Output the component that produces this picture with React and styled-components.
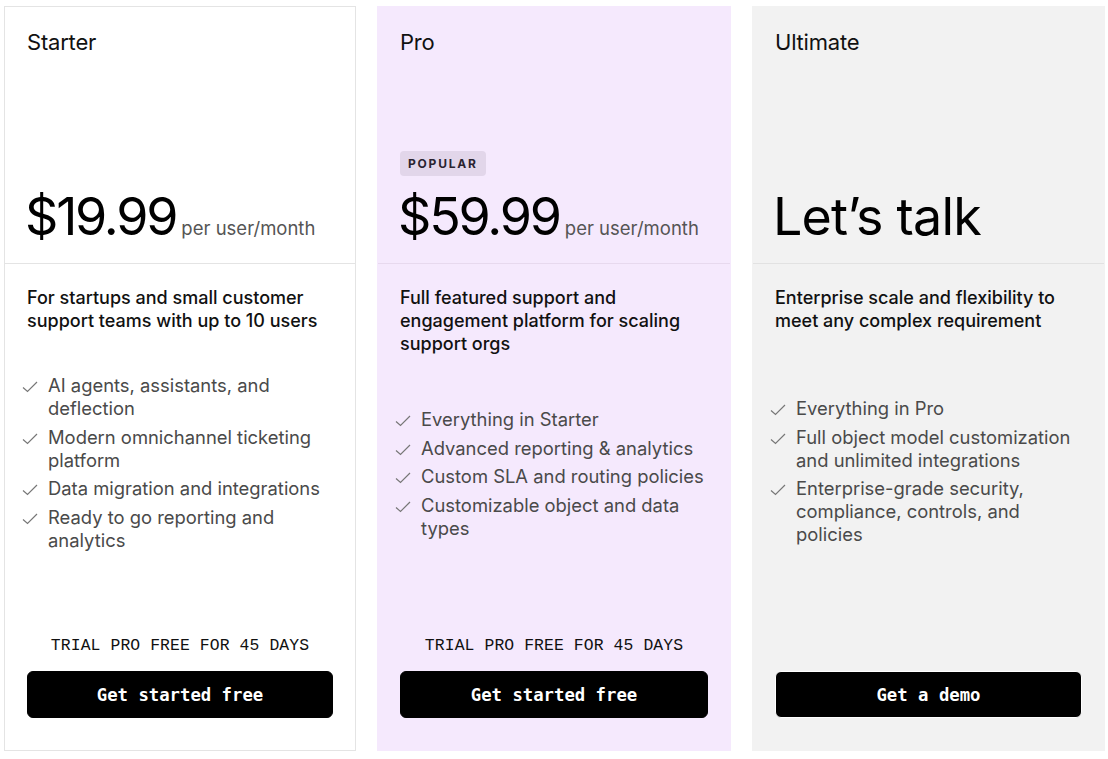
import styled, { createGlobalStyle } from 'styled-components';

const Global = createGlobalStyle`
  html, body { margin: 0; padding: 0; background: #fff; }
  body { font-family: Inter, "Noto Sans", sans-serif; color: #111; }
`

const Page = styled.div`
  display: grid;
  grid-template-columns: 352px 354px 353px;
  gap: 21px;
  padding: 6px 4px 8px;
  height: 759px;
  box-sizing: border-box;
`

const Card = styled.div`
  display: flex;
  flex-direction: column;
  background: ${p => p.bg};
  border: 1px solid ${p => p.line};
  box-sizing: border-box;
`

const Head = styled.div`
  height: 257px;
  box-sizing: border-box;
  padding: 23px 22px 20px;
  display: flex;
  flex-direction: column;
  justify-content: space-between;
  border-bottom: 1px solid ${p => p.line};
`

const Title = styled.h3`
  margin: 0;
  font-size: 22px;
  font-weight: 400;
  line-height: 24px;
  letter-spacing: -0.2px;
`

const Badge = styled.span`
  display: inline-block;
  background: #e2d6ea;
  border-radius: 4px;
  padding: 0 8px;
  height: 25px;
  line-height: 25px;
  font-size: 12px;
  font-weight: 700;
  letter-spacing: 1.8px;
  color: #2a2330;
  margin-bottom: 15px;
`

const PriceRow = styled.div`
  display: flex;
  align-items: baseline;
  gap: 5px;
`

const Price = styled.span`
  font-size: 52px;
  line-height: 52px;
  letter-spacing: ${p => (p.wide ? '-0.8px' : '-2.2px')};
  font-weight: 400;
  color: #000;
  margin-left: -2px;
`

const Per = styled.span`
  font-size: 18.5px;
  color: #555;
`

const Body = styled.div`
  flex: 1;
  display: flex;
  flex-direction: column;
  padding: 22px 22px 32px;
`

const Desc = styled.p`
  margin: 0;
  font-size: 18px;
  line-height: 23px;
  font-weight: 500;
  color: #111;
`

const Features = styled.ul`
  list-style: none;
  margin: ${p => p.top}px 0 0 -5px;
  padding: 0;
  display: flex;
  flex-direction: column;
  gap: 5.5px;
`

const Item = styled.li`
  display: flex;
  gap: 10px;
  font-size: 18.4px;
  line-height: 23px;
  color: #4a4a4a;

  svg { flex: none; margin-top: 7px; }
`

const Trial = styled.div`
  margin-top: auto;
  text-align: center;
  font-family: "Liberation Mono", "DejaVu Sans Mono", monospace;
  font-size: 16.4px;
  letter-spacing: 0.1px;
  color: #111;
  margin-bottom: 16px;
`

const Button = styled.button`
  margin-top: ${p => (p.alone ? 'auto' : '0')};
  height: 47px;
  width: 100%;
  background: #000;
  color: #fff;
  border: 1px solid ${p => p.ring || '#000'};
  border-radius: 6px;
  font-family: "DejaVu Sans Mono", "Liberation Mono", monospace;
  font-size: 17.3px;
  font-weight: 700;
  cursor: pointer;
`

const Check = () => (
  <svg width="16" height="12" viewBox="0 0 16 12">
    <path d="M1 6.5 L5.5 10.5 L15 1" fill="none" stroke="#777" strokeWidth="1.2" />
  </svg>
)

const plans = [
  {
    name: 'Starter',
    price: '$19.99',
    per: true,
    desc: 'For startups and small customer support teams with up to 10 users',
    top: 42,
    features: [
      'AI agents, assistants, and deflection',
      'Modern omnichannel ticketing platform',
      'Data migration and integrations',
      'Ready to go reporting and analytics',
    ],
    trial: true,
    cta: 'Get started free',
    bg: '#fff',
    line: '#e4e4e4',
  },
  {
    name: 'Pro',
    price: '$59.99',
    per: true,
    popular: true,
    desc: 'Full featured support and engagement platform for scaling support orgs',
    top: 53,
    features: [
      'Everything in Starter',
      'Advanced reporting & analytics',
      'Custom SLA and routing policies',
      'Customizable object and data types',
    ],
    trial: true,
    cta: 'Get started free',
    bg: '#f5e9fd',
    line: '#e7d9ee',
  },
  {
    name: 'Ultimate',
    price: 'Let’s talk',
    desc: 'Enterprise scale and flexibility to meet any complex requirement',
    top: 65,
    features: [
      'Everything in Pro',
      'Full object model customization and unlimited integrations',
      'Enterprise-grade security, compliance, controls, and policies',
    ],
    cta: 'Get a demo',
    ring: '#fff',
    bg: '#f2f2f2',
    line: '#e2e2e2',
  },
]

const App = () => (
  <>
    <Global />
    <Page>
      {plans.map(p => (
        <Card key={p.name} bg={p.bg} line={p.bg === '#fff' ? p.line : p.bg}>
          <Head line={p.line}>
            <Title>{p.name}</Title>
            <div>
              {p.popular && <Badge>POPULAR</Badge>}
              <PriceRow>
                <Price wide={!p.per}>{p.price}</Price>
                {p.per && <Per>per user/month</Per>}
              </PriceRow>
            </div>
          </Head>
          <Body>
            <Desc>{p.desc}</Desc>
            <Features top={p.top}>
              {p.features.map(f => (
                <Item key={f}><Check />{f}</Item>
              ))}
            </Features>
            {p.trial && <Trial>TRIAL PRO FREE FOR 45 DAYS</Trial>}
            <Button alone={!p.trial} ring={p.ring}>{p.cta}</Button>
          </Body>
        </Card>
      ))}
    </Page>
  </>
)

export default App
